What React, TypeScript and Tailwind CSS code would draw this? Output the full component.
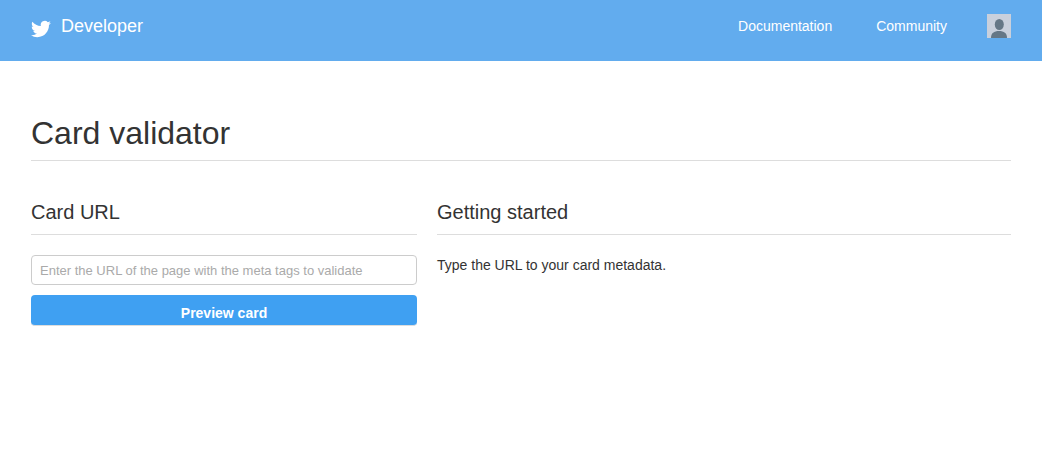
export default function App() {
    return (
        <div className="min-h-[453px] bg-white font-['Liberation_Sans',Arial,sans-serif] text-[#333]">
            <header className="h-[61px] bg-[#62acee] pl-[30px] pr-[31px] flex items-start justify-between text-white">
                <a className="flex items-start">
                    <svg viewBox="0 0 24 24" className="w-[20px] h-[20px] ml-[1px] mt-[19px] fill-white">
                        <path d="M23.95 4.57a10 10 0 0 1-2.82.77 4.96 4.96 0 0 0 2.16-2.72 9.9 9.9 0 0 1-3.12 1.18 4.92 4.92 0 0 0-8.38 4.48A13.98 13.98 0 0 1 1.64 3.16a4.82 4.82 0 0 0-.67 2.48c0 1.71.87 3.21 2.19 4.1a4.9 4.9 0 0 1-2.23-.62v.06a4.92 4.92 0 0 0 3.95 4.83 4.99 4.99 0 0 1-2.21.08 4.94 4.94 0 0 0 4.6 3.42A9.87 9.87 0 0 1 0 19.54a14 14 0 0 0 7.56 2.21c9.05 0 14-7.5 14-13.98 0-.21 0-.42-.02-.63a9.94 9.94 0 0 0 2.41-2.54z" />
                    </svg>
                    <span className="ml-[10px] mt-[15px] text-[18px] leading-[22px]">Developer</span>
                </a>
                <nav className="flex items-start">
                    <a className="mt-[18px] text-[14px] leading-[17px]">Documentation</a>
                    <a className="ml-[44px] mt-[18px] text-[14px] leading-[17px]">Community</a>
                    <div className="ml-[40px] mt-[14px] w-[24px] h-[24px] bg-[#c9d0dc] overflow-hidden">
                        <svg viewBox="0 0 24 24" className="w-[24px] h-[24px] fill-[#657786]">
                            <ellipse cx="12.3" cy="10.5" rx="4.5" ry="5.5" />
                            <path d="M4 24c0-5 3-7 8-7s8 2 8 7z" />
                        </svg>
                    </div>
                </nav>
            </header>
            <main className="px-[31px]">
                <h1 className="mt-[55px] text-[32px] leading-[35px] pb-[9px] border-b border-[#ddd]">Card validator</h1>
                <div className="mt-[39px] flex gap-[20px]">
                    <section className="w-[386px]">
                        <h2 className="text-[20px] leading-[24px] pb-[10px] border-b border-[#ddd]">Card URL</h2>
                        <input
                            placeholder="Enter the URL of the page with the meta tags to validate"
                            className="mt-[20px] block w-full h-[30px] px-[8px] text-[13px] border border-[#ccc] rounded-[4px] placeholder:text-[#aaa] outline-none"
                        />
                        <button className="mt-[10px] block w-full h-[31px] pt-[7px] bg-[#3fa0f2] border-b border-[#ddd] rounded-[4px] text-white text-[14px] font-bold">Preview card</button>
                    </section>
                    <section className="flex-1">
                        <h2 className="text-[20px] leading-[24px] pb-[10px] border-b border-[#ddd]">Getting started</h2>
                        <p className="mt-[22px] text-[14px] leading-[17px]">Type the URL to your card metadata.</p>
                    </section>
                </div>
            </main>
        </div>
    )
}
